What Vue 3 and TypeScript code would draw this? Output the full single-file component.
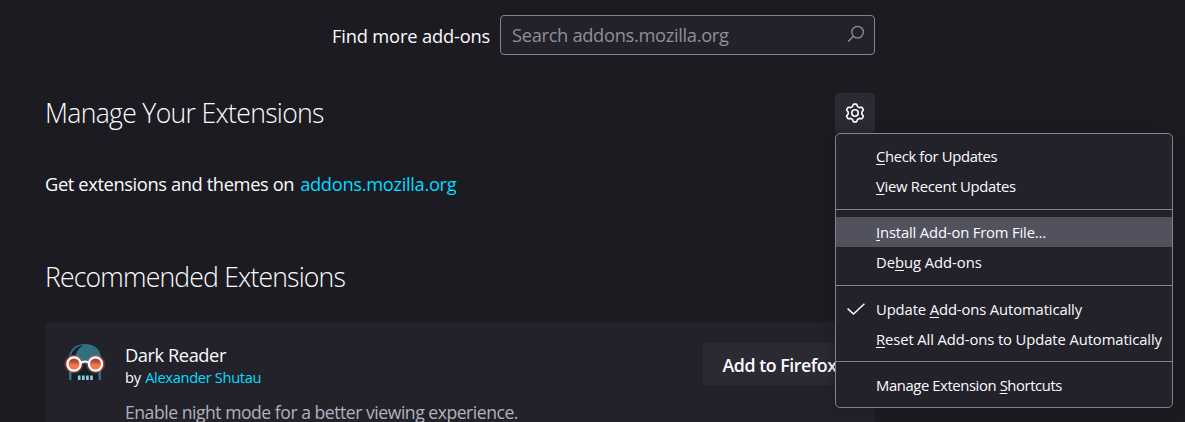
<script setup lang="ts">
interface MenuItem {
  before: string
  key: string
  after: string
  cls: string
  checked?: boolean
  active?: boolean
}

const groups: MenuItem[][] = [
  [
    { before: '', key: 'C', after: 'heck for Updates', cls: 'check' },
    { before: '', key: 'V', after: 'iew Recent Updates', cls: 'view' },
  ],
  [
    { before: '', key: 'I', after: 'nstall Add-on From File...', cls: 'install', active: true },
    { before: 'De', key: 'b', after: 'ug Add-ons', cls: 'debug' },
  ],
  [
    { before: 'Update ', key: 'A', after: 'dd-ons Automatically', cls: 'update', checked: true },
    { before: '', key: 'R', after: 'eset All Add-ons to Update Automatically', cls: 'reset' },
  ],
  [{ before: 'Manage Extension ', key: 'S', after: 'hortcuts', cls: 'shortcuts' }],
]

// Six-toothed gear outline: [angle offset from the tooth's axis, radius] per tooth.
const tooth: [number, number][] = [[-21, 6.9], [-13, 8.4], [-9, 9], [9, 9], [13, 8.4], [21, 6.9]]
const gearPoints = [0, 60, 120, 180, 240, 300]
  .flatMap((axis) =>
    tooth.map(([offset, radius]) => {
      const a = ((axis + offset - 90) * Math.PI) / 180
      return `${(10 + radius * Math.cos(a)).toFixed(2)},${(10 + radius * Math.sin(a)).toFixed(2)}`
    }),
  )
  .join(' ')
</script>

<template>
  <div class="page">
    <main class="content">
      <div class="search-row">
        <label class="search-label">Find more add-ons</label>
        <div class="search-box">
          <span class="placeholder">Search addons.mozilla.org</span>
          <svg class="search-icon" viewBox="0 0 18 18" fill="none" stroke="#918f96" stroke-width="1.3">
            <circle cx="10.6" cy="7.1" r="5.8" />
            <path d="M6.4 11.3 1.4 16.3" stroke-linecap="round" />
          </svg>
        </div>
      </div>

      <header class="heading-row">
        <h1 class="manage">Manage Your Extensions</h1>
        <div class="tools">
          <button class="gear" aria-label="Tools for all add-ons">
            <svg viewBox="0 0 20 20" fill="none" stroke="#fbfbfe" stroke-width="1.6" stroke-linejoin="round">
              <polygon :points="gearPoints" />
              <circle cx="10" cy="10" r="3.2" />
            </svg>
          </button>
          <div class="menu" role="menu">
            <div v-for="(group, g) in groups" :key="g" class="group">
              <div v-for="item in group" :key="item.cls" class="item" :class="{ active: item.active }" role="menuitem">
                <span class="mark">
                  <svg v-if="item.checked" viewBox="0 0 18 12" fill="none" stroke="#fbfbfe" stroke-width="1.5">
                    <path d="M.6 5.6 6.500 11 17.400.7" />
                  </svg>
                </span>
                <span class="text" :class="item.cls">{{ item.before }}<u>{{ item.key }}</u>{{ item.after }}</span>
              </div>
            </div>
          </div>
        </div>
      </header>

      <p class="get"><span>Get extensions and themes on</span><a>addons.mozilla.org</a></p>

      <h1 class="recommended">Recommended Extensions</h1>

      <section class="card">
        <svg class="logo" viewBox="0 0 40 40">
          <defs>
            <radialGradient id="halo">
              <stop offset=".7" stop-color="#e5553f" stop-opacity=".8" />
              <stop offset="1" stop-color="#e5553f" stop-opacity="0" />
            </radialGradient>
            <linearGradient id="lens" x1="0" y1="0" x2="0" y2="1">
              <stop offset=".25" stop-color="#a94738" />
              <stop offset=".6" stop-color="#f47750" />
            </linearGradient>
          </defs>
          <path d="M4 38V17C4 7 11 2 20 2s16 5 16 15v21z" fill="#316e7e" />
          <path d="M5.5 15C7.5 8 12 4 18 3.5 14 6 11 9.5 10.5 15z" fill="#102027" />
          <path d="M6.500 26 12 22h16l5.500 4v12h-27z" fill="#102027" />
          <circle cx="9" cy="22" r="10.2" fill="url(#halo)" />
          <circle cx="30.5" cy="22" r="10.2" fill="url(#halo)" />
          <path d="M15 21q5-3 10 0" fill="none" stroke="#fff" stroke-width="2" />
          <g fill="url(#lens)" stroke="#fff" stroke-width="2.2">
            <circle cx="9" cy="22" r="6.6" />
            <circle cx="30.5" cy="22" r="6.6" />
          </g>
          <path d="M14.2 33.5V38M18.3 33.5V38M22.4 33.5V38M26.5 33.5V38" stroke="#8ccbd6" stroke-width="2.7" />
        </svg>
        <div class="info">
          <div class="name">Dark Reader</div>
          <div class="author"><span>by</span><a>Alexander Shutau</a></div>
          <div class="summary">Enable night mode for a better viewing experience.</div>
        </div>
        <button class="add">Add to Firefox</button>
      </section>
    </main>
  </div>
</template>

<style>
body {
  background: #1c1b22;
}
</style>

<style scoped>
.page {
  box-sizing: border-box;
  width: 1185px;
  height: 422px;
  overflow: hidden;
  padding-left: 45px;
  background: #1c1b22;
  color: #fbfbfe;
  font: 18.3px/24px "Open Sans", "Noto Sans", sans-serif;
  white-space: nowrap;
}
.content { width: 830px; }
.search-row {
  display: flex;
  justify-content: flex-end;
  align-items: center;
  padding-top: 15px;
}
.search-label { width: 168px; padding-top: 2px; letter-spacing: -0.17px; }
.search-box {
  box-sizing: border-box;
  display: flex;
  align-items: center;
  justify-content: space-between;
  width: 375px;
  height: 40px;
  padding: 0 9px 0 11px;
  border: 1px solid #83828a;
  border-radius: 4px;
  background: #23222b;
  color: #918f96;
}
.placeholder { letter-spacing: -0.32px; }
.search-icon { width: 18px; height: 18px; margin-top: -2px; }
.heading-row {
  display: flex;
  justify-content: space-between;
  margin-top: 38px;
}
h1 { margin: 0; font-size: 26.6px; line-height: 40px; font-weight: 300; }
.manage { letter-spacing: -0.69px; }
button { border: 0; padding: 0; color: inherit; font: inherit; background: #2b2a33; border-radius: 4px; }
.tools { position: relative; width: 40px; height: 40px; }
.gear { display: flex; align-items: center; justify-content: center; width: 40px; height: 40px; }
.gear svg { width: 20px; height: 20px; }
.menu {
  position: absolute;
  z-index: 2;
  top: 40px;
  left: 0;
  box-sizing: border-box;
  width: 338px;
  border: 1px solid #83828a;
  border-radius: 5px;
  background: #23222b;
  box-shadow: 0 2px 14px rgba(12, 12, 13, 0.3);
  font-size: 14.8px;
}
.group { padding: 7px 0 8px; }
.group:first-child { padding: 8px 0 7px; }
.group + .group { border-top: 1px solid #83828a; }
.item { display: flex; align-items: center; height: 30px; }
.item.active { background: #52525e; }
.mark { display: flex; width: 29px; padding: 2px 0 0 11px; }
.mark svg { width: 18px; height: 12px; }
.check { padding-bottom: 2px; letter-spacing: -0.34px; }
.view { padding-bottom: 2px; letter-spacing: -0.27px; }
.install { letter-spacing: -0.16px; }
.debug { letter-spacing: -0.05px; }
.update { padding-top: 2px; letter-spacing: -0.12px; }
.reset { padding-top: 2px; letter-spacing: -0.1px; }
.shortcuts { padding-top: 2px; letter-spacing: -0.39px; }
u { text-decoration-thickness: 1px; text-underline-offset: 2px; }
a { color: #00ddff; }
.get { display: flex; gap: 6px; margin: 39px 0 0; letter-spacing: -0.38px; }
.get a { letter-spacing: -0.32px; }
.recommended { margin-top: 61px; letter-spacing: -0.83px; }
.card {
  display: flex;
  box-sizing: border-box;
  height: 130px;
  margin-top: 25px;
  padding: 20px 20px 0;
  border-radius: 4px;
  background: #23222b;
}
.logo { width: 40px; height: 40px; overflow: visible; }
.info { flex: 1; margin-left: 20px; }
.name { padding-top: 1px; letter-spacing: -0.45px; }
.author { display: flex; gap: 4.5px; font-size: 14.7px; line-height: 20px; letter-spacing: -0.35px; }
.summary { margin-top: 13px; color: #b1b1bd; font-size: 17.6px; letter-spacing: -0.48px; }
.add { width: 152px; height: 42px; margin-top: 1px; padding: 2px 0 0 1px; font-size: 17.8px; font-weight: 600; letter-spacing: -0.46px; }
</style>
